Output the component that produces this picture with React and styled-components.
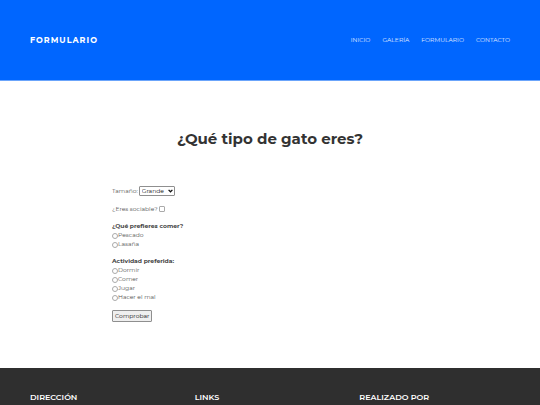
import React, { useState } from "react";
import styled, { createGlobalStyle } from "styled-components";

const GlobalStyle = createGlobalStyle`
  * {
    box-sizing: border-box;
  }
  body {
    margin: 0;
    background: #fff;
    color: #555;
    font-family: Montserrat, Inter, "Open Sans", sans-serif;
    font-size: 6px;
    line-height: 9px;
  }
`;

const Header = styled.header`
  display: flex;
  align-items: center;
  justify-content: space-between;
  padding: 34px 30px;
  background: #0066ff;
  border-bottom: 1px solid #6ba5fb;
`;

const Logo = styled.a`
  color: #fff;
  font-size: 8px;
  line-height: 12px;
  font-weight: 700;
  letter-spacing: 1px;
  text-decoration: none;
`;

const Nav = styled.nav`
  display: flex;
  gap: 12px;
`;

const NavLink = styled.a`
  color: #e3eeff;
  text-decoration: none;
  text-transform: uppercase;

  &:hover {
    color: #fff;
  }
`;

const Main = styled.main`
  padding: 48px 30px 46px;
`;

const Title = styled.h1`
  margin: 0 0 37px;
  color: #333;
  font-size: 15px;
  line-height: 20px;
  font-weight: 700;
  text-align: center;
`;

const Form = styled.form`
  display: flex;
  flex-direction: column;
  align-items: flex-start;
  gap: 8px;
  max-width: 316px;
  margin: 0 auto;
`;

const Field = styled.div`
  display: flex;
  align-items: center;
  gap: 1px;
  min-height: 10px;
`;

const SelectBox = styled.div`
  display: grid;
  align-items: center;

  > * {
    grid-area: 1 / 1;
  }
  svg {
    justify-self: end;
    margin-right: 2px;
    pointer-events: none;
  }
`;

const Select = styled.select`
  appearance: none;
  width: 36px;
  height: 10px;
  padding: 0 8px 0 2px;
  border: 1px solid #8f8f8f;
  border-radius: 1px;
  background: #fff;
  color: #111;
  font-family: inherit;
  font-size: 6px;
  line-height: 8px;
`;

const Group = styled.fieldset`
  margin: 0;
  padding: 0;
  border: 0;
`;

const Legend = styled.legend`
  padding: 0;
  color: #444;
  font-weight: 700;
`;

const Option = styled.label`
  display: flex;
  align-items: center;
`;

const Tick = styled.input`
  appearance: none;
  width: 6px;
  height: 6px;
  margin: 0;
  border: 1px solid #aaa;
  border-radius: ${(props) => (props.type === "radio" ? "50%" : "1px")};
  background: #fff;

  &:checked {
    background: #0066ff;
  }
`;

const Button = styled.button`
  padding: 1px 2px;
  border: 1px solid #8f8f8f;
  border-radius: 1px;
  background: #efefef;
  color: #111;
  font-family: inherit;
  font-size: 6px;
  line-height: 8px;
`;

const Footer = styled.footer`
  display: grid;
  grid-template-columns: repeat(3, 1fr);
  gap: 14px;
  padding: 24px 30px 3px;
  background: #2f2f2f;
`;

const FooterTitle = styled.h2`
  margin: 0;
  color: #fff;
  font-size: 8px;
  line-height: 10px;
  font-weight: 600;
  text-transform: uppercase;
`;

const links = ["Inicio", "Galería", "Formulario", "Contacto"];
const food = ["Pescado", "Lasaña"];
const activities = ["Dormir", "Comer", "Jugar", "Hacer el mal"];

function RadioGroup({ title, name, options }) {
  const [selected, setSelected] = useState("");

  return (
    <Group>
      <Legend>{title}</Legend>
      {options.map((option) => (
        <Option key={option}>
          <Tick
            type="radio"
            name={name}
            value={option}
            checked={selected === option}
            onChange={(e) => setSelected(e.target.value)}
          />
          {option}
        </Option>
      ))}
    </Group>
  );
}

function App() {
  return (
    <>
      <GlobalStyle />
      <Header>
        <Logo href="#">FORMULARIO</Logo>
        <Nav>
          {links.map((link) => (
            <NavLink key={link} href="#">{link}</NavLink>
          ))}
        </Nav>
      </Header>
      <Main>
        <Title>¿Qué tipo de gato eres?</Title>
        <Form onSubmit={(e) => e.preventDefault()}>
          <Field>
            <label htmlFor="size">Tamaño:</label>
            <SelectBox>
              <Select id="size" name="size" defaultValue="Grande">
                <option>Grande</option>
                <option>Mediano</option>
                <option>Pequeño</option>
              </Select>
              <svg width="5" height="4" viewBox="0 0 5 4" aria-hidden="true">
                <path d="M0.6 0.9 2.5 2.8 4.4 0.9" fill="none" stroke="#111" strokeWidth="1.3" />
              </svg>
            </SelectBox>
          </Field>
          <Field>
            <label htmlFor="sociable">¿Eres sociable?</label>
            <Tick id="sociable" name="sociable" type="checkbox" />
          </Field>
          <RadioGroup title="¿Qué prefieres comer?" name="food" options={food} />
          <RadioGroup title="Actividad preferida:" name="activity" options={activities} />
          <Button type="submit">Comprobar</Button>
        </Form>
      </Main>
      <Footer>
        <FooterTitle>Dirección</FooterTitle>
        <FooterTitle>Links</FooterTitle>
        <FooterTitle>Realizado por</FooterTitle>
      </Footer>
    </>
  );
}

export default App;
